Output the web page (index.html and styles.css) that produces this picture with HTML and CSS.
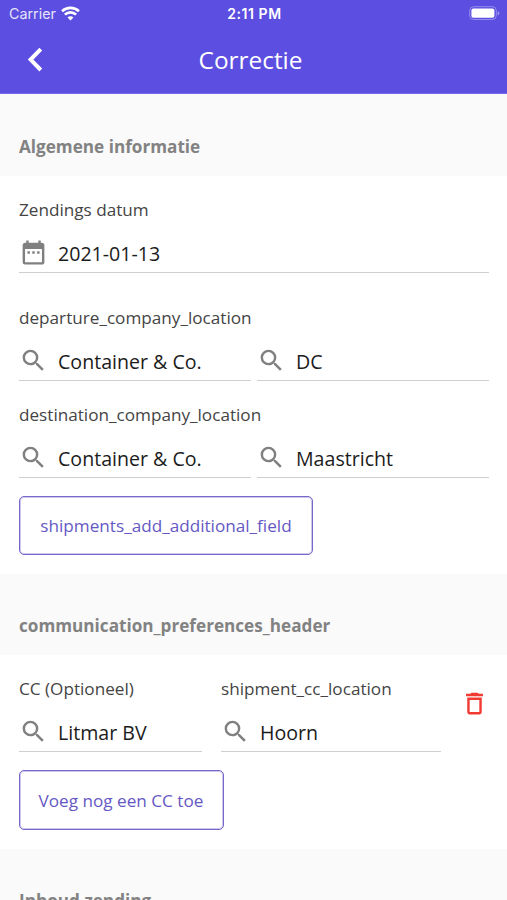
FILE: index.html
```html
<!DOCTYPE html>
<html lang="nl">
<head>
<meta charset="utf-8">
<title>Correctie</title>
<link rel="stylesheet" href="styles.css">
</head>
<body>
<svg class="defs" width="0" height="0" aria-hidden="true">
  <symbol id="search" viewBox="0 0 24 24"><path d="M15.5 14h-.79l-.28-.27A6.47 6.47 0 0 0 16 9.5 6.5 6.5 0 1 0 9.5 16c1.61 0 3.09-.59 4.23-1.57l.27.28v.79l5 4.99L20.49 19l-4.99-5zm-6 0a4.5 4.5 0 1 1 0-9 4.5 4.5 0 0 1 0 9z"/></symbol>
</svg>
<header class="top">
  <div class="status">
    <div class="carrier"><span class="carrier-name">Carrier</span>
      <svg class="wifi" viewBox="0 0 18 14"><path d="M9 13.6 6.2 10.7a3.9 3.9 0 0 1 5.6 0z" fill="#fff"/><path d="M3.7 8.1a7.6 7.6 0 0 1 10.6 0M1 4.9a11.6 11.6 0 0 1 16 0" fill="none" stroke="#fff" stroke-width="2.5"/></svg>
    </div>
    <span class="time">2:11 PM</span>
    <svg class="battery" viewBox="0 0 31 15"><rect x=".7" y=".7" width="26.6" height="12.8" rx="4" fill="none" stroke="#fff" stroke-opacity=".35"/><rect x="2.4" y="2.4" width="23" height="9.4" rx="2" fill="#fff"/><path d="M28.7 5v4.4q1.7-.7 1.7-2.2T28.7 5z" fill="#fff" fill-opacity=".4"/></svg>
  </div>
  <div class="bar">
    <svg class="back" viewBox="0 0 16 26"><path d="M13.8 2.2 3.6 12.6l10.2 10.4" fill="none" stroke="#fff" stroke-width="4"/></svg>
    <h1>Correctie</h1>
  </div>
</header>
<main>
  <h2>Algemene informatie</h2>
  <section class="general">
    <div class="field date">
      <label>Zendings datum</label>
      <div class="input"><svg class="icon" viewBox="0 0 24 24"><path d="M9 11H7v2h2v-2zm4 0h-2v2h2v-2zm4 0h-2v2h2v-2zm2-7h-1V2h-2v2H8V2H6v2H5c-1.11 0-1.99.9-1.99 2L3 20a2 2 0 0 0 2 2h14c1.1 0 2-.9 2-2V6c0-1.1-.9-2-2-2zm0 16H5V9h14v11z"/></svg><span>2021-01-13</span></div>
    </div>
    <div class="field">
      <label>departure_company_location</label>
      <div class="pair">
        <div class="input"><svg class="icon"><use href="#search"/></svg><span>Container &amp; Co.</span></div>
        <div class="input"><svg class="icon"><use href="#search"/></svg><span>DC</span></div>
      </div>
    </div>
    <div class="field destination">
      <label>destination_company_location</label>
      <div class="pair">
        <div class="input"><svg class="icon"><use href="#search"/></svg><span>Container &amp; Co.</span></div>
        <div class="input"><svg class="icon"><use href="#search"/></svg><span>Maastricht</span></div>
      </div>
    </div>
    <button class="add-field" type="button">shipments_add_additional_field</button>
  </section>
  <h2>communication_preferences_header</h2>
  <section class="communication">
    <div class="cc">
      <div class="field">
        <label>CC (Optioneel)</label>
        <div class="input"><svg class="icon"><use href="#search"/></svg><span>Litmar BV</span></div>
      </div>
      <div class="field">
        <label>shipment_cc_location</label>
        <div class="input"><svg class="icon"><use href="#search"/></svg><span>Hoorn</span></div>
      </div>
      <svg class="trash" viewBox="0 0 24 24"><path d="M6 19c0 1.1.9 2 2 2h8c1.1 0 2-.9 2-2V7H6v12zM8 9h8v10H8V9zm7.5-5-1-1h-5l-1 1H5v2h14V4h-3.5z"/></svg>
    </div>
    <button class="add-cc" type="button">Voeg nog een CC toe</button>
  </section>
  <h2>Inhoud zending</h2>
</main>
</body>
</html>
```

FILE: styles.css
```css
* { box-sizing: border-box; }
body {
  margin: 0;
  height: 900px;
  overflow: hidden;
  background: #fafafa;
  color: #1c1c1c;
  font-family: "Open Sans", sans-serif;
}
.defs { display: block; }
.top {
  height: 94px;
  background: #5b4ee0;
  border-bottom: 1px solid #7568e5;
  color: #fff;
}
.status {
  display: grid;
  grid-template-columns: 1fr auto 1fr;
  align-items: center;
  height: 27px;
  padding: 0 7px 0 9px;
  font: 14.3px/27px Inter, sans-serif;
}
.carrier { display: flex; align-items: center; gap: 5.5px; }
.carrier-name { color: #e6e3fb; }
.wifi { width: 19px; height: 15px; }
.time { font-size: 14px; font-weight: 600; letter-spacing: 0.55px; }
.battery { width: 31px; height: 15px; justify-self: end; }
.bar {
  display: grid;
  grid-template-columns: 56px 1fr 62px;
  align-items: center;
  height: 66px;
}
.back { width: 16px; height: 26px; margin-left: 27px; }
h1 {
  margin: 0;
  font-size: 24.4px;
  font-weight: 400;
  line-height: 32px;
  text-align: center;
}
h2 {
  height: 81px;
  margin: 0;
  padding: 40px 19px 0;
  color: #828282;
  font-size: 17.15px;
  font-weight: 700;
  line-height: 24px;
}
main > h2:first-child { height: 82px; padding-top: 41px; }
section { padding: 0 18px 0 19px; background: #fff; }
.general { height: 398px; padding-top: 22px; }
.communication { height: 194px; padding-top: 22px; }
label {
  display: block;
  height: 24px;
  color: #444;
  font-size: 17.15px;
  line-height: 24px;
  white-space: nowrap;
}
.input {
  display: flex;
  align-items: flex-start;
  gap: 10px;
  height: 36px;
  border-bottom: 1px solid #cfcfcf;
  font-size: 19.6px;
  line-height: 34px;
  white-space: nowrap;
}
.field { margin-bottom: 22px; }
.field .input { margin-top: 15px; }
.pair { display: grid; grid-template-columns: 1fr 1fr; gap: 6px; }
.date { margin-bottom: 33px; }
.destination { margin-bottom: 0; }
.icon { width: 29px; height: 29px; margin-top: 1px; flex: none; fill: #808080; }
button {
  display: block;
  border: 1px solid #7568c8;
  border-radius: 5px;
  padding: 0;
  background: #fff;
  box-shadow: inset 0 0 0 1px #cdc8ec;
  color: #6558c4;
  font: 17.15px/24px "Open Sans", sans-serif;
  white-space: nowrap;
}
.add-field { width: 294px; height: 59px; margin-top: 18px; }
.add-cc { width: 205px; height: 60px; margin-top: 18px; padding: 1px 1px 0 0; }
.cc { display: grid; grid-template-columns: 183px 220px 1fr; column-gap: 19px; }
.cc .field { margin: 0; }
.trash { width: 29px; height: 29px; margin: 12px 0 0; fill: #f13a32; }
```
